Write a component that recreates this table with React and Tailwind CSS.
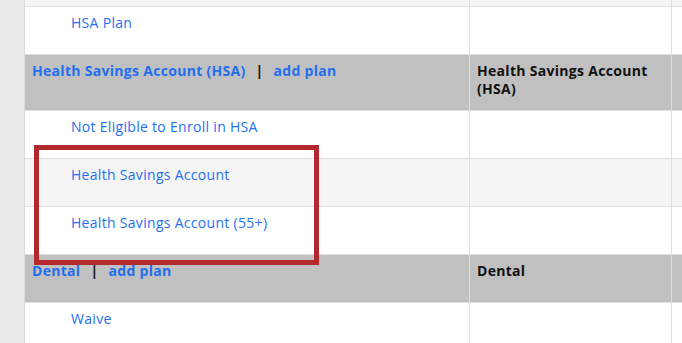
const rows = [
  { type: 'plan', label: '', bg: 'bg-[#f5f5f5]', partial: true },
  { type: 'plan', label: 'HSA Plan', bg: 'bg-white' },
  { type: 'group', label: 'Health Savings Account (HSA)', right: 'Health Savings Account (HSA)' },
  { type: 'plan', label: 'Not Eligible to Enroll in HSA', bg: 'bg-white' },
  { type: 'plan', label: 'Health Savings Account', bg: 'bg-[#f5f5f5]' },
  { type: 'plan', label: 'Health Savings Account (55+)', bg: 'bg-white' },
  { type: 'group', label: 'Dental', right: 'Dental' },
  { type: 'plan', label: 'Waive', bg: 'bg-white' },
];

function PlanRow({ row }) {
  if (row.partial) {
    return (
      <div className={`flex h-[7px] shrink-0 border-b border-[#dedede] ${row.bg}`}>
        <div className="w-[445px] shrink-0 border-r border-[#dedede]" />
        <div className="w-[202px] shrink-0 border-r border-[#dedede]" />
        <div className="flex-1" />
      </div>
    );
  }
  return (
    <div className={`flex min-h-[48px] shrink-0 border-b border-[#dedede] ${row.bg}`}>
      <div className="w-[445px] shrink-0 border-r border-[#dedede] pl-[46px] pt-[3px] pb-[12px]">
        <a className="text-[#1f6ff0] text-[14px] leading-[18px] tracking-[0.3px]">{row.label}</a>
      </div>
      <div className="w-[202px] shrink-0 border-r border-[#dedede]" />
      <div className="flex-1" />
    </div>
  );
}

function GroupRow({ row }) {
  return (
    <div className="flex min-h-[48px] shrink-0 border-b border-[#dedede] bg-[#c0c0c0]">
      <div className="w-[445px] shrink-0 border-r border-[#dedede] pl-[7px] pt-[7px] pb-[12px] text-[14px] leading-[18px] font-bold tracking-[0.3px]">
        <a className="text-[#1f6ff0]">{row.label}</a>
        <span className="mx-[10px] text-[#111]">|</span>
        <a className="text-[#1f6ff0]">add plan</a>
      </div>
      <div className="w-[202px] shrink-0 border-r border-[#dedede] pl-[7px] pr-[8px] pt-[7px] pb-[12px] text-[14px] leading-[18px] font-bold text-[#111] tracking-[0.3px]">
        {row.right}
      </div>
      <div className="flex-1" />
    </div>
  );
}

export default function App() {
  return (
    <div className="relative flex h-[343px] w-[682px] overflow-hidden bg-white font-['Open_Sans','Liberation_Sans',sans-serif]">
      <div className="w-[25px] shrink-0 border-r border-[#dcdcdc] bg-[#ebebeb]" />
      <div className="flex-1 flex flex-col">
        {rows.map((row, i) =>
          row.type === 'group' ? <GroupRow key={i} row={row} /> : <PlanRow key={i} row={row} />
        )}
      </div>
      {/* highlight box */}
      <div className="absolute left-[34px] top-[145px] h-[120px] w-[285px] border-[5px] border-[#b3282d]" />
    </div>
  );
}
